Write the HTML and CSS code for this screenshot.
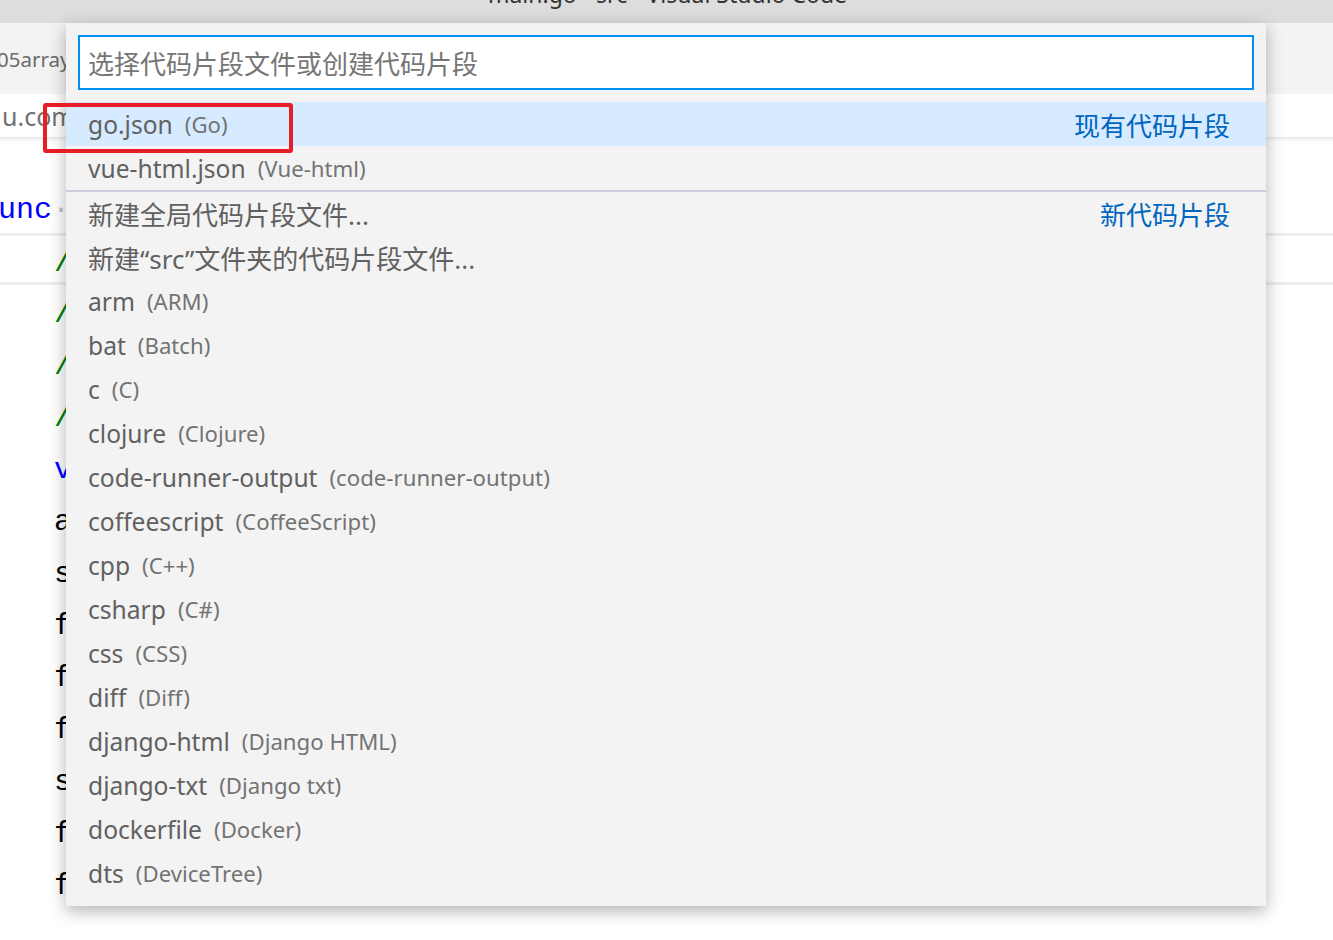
FILE: index.html
```html
<!DOCTYPE html>
<html lang="zh-CN">
<head>
<meta charset="utf-8">
<title>main.go - src - Visual Studio Code</title>
<link rel="stylesheet" href="styles.css">
</head>
<body>
<div class="window">
  <header class="titlebar"><span class="title">main.go - src - Visual Studio Code</span></header>
  <div class="tabs"><span class="tab-label">05array.go</span></div>
  <div class="breadcrumbs"><span class="crumb">u.com</span></div>
  <div class="editor">
    <div class="code">
      <div class="line"><span class="kw">func</span><span class="ws">·</span>main() {</div>
      <div class="line current indent"><span class="cm">// 数组的定义</span></div>
      <div class="line indent"><span class="cm">// 数组是同一种数据类型元素的集合</span></div>
      <div class="line indent"><span class="cm">// 数组的长度是固定的</span></div>
      <div class="line indent"><span class="cm">// 数组的长度是类型的一部分</span></div>
      <div class="line indent"><span class="kw">var</span> a1 [3]bool</div>
      <div class="line indent">a1 = [3]bool{true, true, true}</div>
      <div class="line indent">s := a1[:]</div>
      <div class="line indent">fmt.Println(a1)</div>
      <div class="line indent">fmt.Println(s)</div>
      <div class="line indent">fmt.Printf("%T\n", a1)</div>
      <div class="line indent">s = append(s, false)</div>
      <div class="line indent">fmt.Println(len(s))</div>
      <div class="line indent">fmt.Println(cap(s))</div>
    </div>
  </div>

  <div class="quick-input">
    <div class="qi-header">
      <input class="qi-box" type="text" placeholder="选择代码片段文件或创建代码片段">
    </div>
    <div class="qi-list">
      <div class="qi-row focused"><span class="qi-label">go.json</span><span class="qi-desc">(Go)</span><span class="qi-group">现有代码片段</span></div>
      <div class="qi-row"><span class="qi-label">vue-html.json</span><span class="qi-desc">(Vue-html)</span></div>
      <div class="qi-row separated cjk"><span class="qi-label">新建全局代码片段文件...</span><span class="qi-group">新代码片段</span></div>
      <div class="qi-row cjk"><span class="qi-label">新建“src”文件夹的代码片段文件...</span></div>
      <div class="qi-row"><span class="qi-label">arm</span><span class="qi-desc">(ARM)</span></div>
      <div class="qi-row"><span class="qi-label">bat</span><span class="qi-desc">(Batch)</span></div>
      <div class="qi-row"><span class="qi-label">c</span><span class="qi-desc">(C)</span></div>
      <div class="qi-row"><span class="qi-label">clojure</span><span class="qi-desc">(Clojure)</span></div>
      <div class="qi-row"><span class="qi-label">code-runner-output</span><span class="qi-desc">(code-runner-output)</span></div>
      <div class="qi-row"><span class="qi-label">coffeescript</span><span class="qi-desc">(CoffeeScript)</span></div>
      <div class="qi-row"><span class="qi-label">cpp</span><span class="qi-desc">(C++)</span></div>
      <div class="qi-row"><span class="qi-label">csharp</span><span class="qi-desc">(C#)</span></div>
      <div class="qi-row"><span class="qi-label">css</span><span class="qi-desc">(CSS)</span></div>
      <div class="qi-row"><span class="qi-label">diff</span><span class="qi-desc">(Diff)</span></div>
      <div class="qi-row"><span class="qi-label">django-html</span><span class="qi-desc">(Django HTML)</span></div>
      <div class="qi-row"><span class="qi-label">django-txt</span><span class="qi-desc">(Django txt)</span></div>
      <div class="qi-row"><span class="qi-label">dockerfile</span><span class="qi-desc">(Docker)</span></div>
      <div class="qi-row"><span class="qi-label">dts</span><span class="qi-desc">(DeviceTree)</span></div>
    </div>
  </div>

  <div class="annotation"></div>
</div>
</body>
</html>
```

FILE: styles.css
```css
* { box-sizing: border-box; }

html, body {
  margin: 0;
  padding: 0;
  width: 1333px;
  height: 940px;
  overflow: hidden;
  background: #ffffff;
  font-family: "Noto Sans", "Noto Sans CJK SC", sans-serif;
}

.window {
  position: relative;
  width: 1333px;
  height: 940px;
  overflow: hidden;
  background: #ffffff;
}

/* title bar */
.titlebar {
  height: 23px;
  background: #dddddd;
  overflow: hidden;
  display: flex;
  justify-content: center;
}
.title {
  display: block;
  margin-top: -17px;
  margin-left: 2px;
  font-size: 23px;
  line-height: 23px;
  color: #333333;
  white-space: nowrap;
}

/* tabs */
.tabs {
  height: 71px;
  background: #f3f3f3;
  display: flex;
  align-items: center;
  overflow: hidden;
}
.tab-label {
  margin-left: -3px;
  font-size: 20.5px;
  color: #6b6b6b;
  white-space: nowrap;
}

/* breadcrumbs */
.breadcrumbs {
  height: 43px;
  background: #ffffff;
  display: flex;
  align-items: center;
  overflow: hidden;
}
.crumb {
  margin-left: 2px;
  font-size: 25px;
  color: #717171;
  white-space: nowrap;
}

/* editor */
.editor {
  height: 803px;
  padding-top: 45px;
  box-shadow: inset 0 6px 6px -6px #cfcfcf;
  overflow: hidden;
}
.code {
  margin-left: -20px;
  font-family: "Liberation Mono", "DejaVu Sans Mono", monospace;
  font-size: 30px;
  color: #000000;
}
.line {
  height: 52px;
  line-height: 56px;
  white-space: pre;
  overflow: hidden;
}
.line.indent { padding-left: 74px; }
.line.current {
  border-top: 3px solid #eeeeee;
  border-bottom: 3px solid #eeeeee;
  line-height: 54px;
  margin-top: -1px;
  margin-bottom: 1px;
}
.kw { color: #0000ff; }
.cm { color: #008000; }
.ws { color: rgba(51, 51, 51, 0.3); }

/* quick input (overlay) */
.quick-input {
  position: absolute;
  left: 66px;
  top: 23px;
  width: 1200px;
  background: #f3f3f3;
  box-shadow: 0 5px 16px rgba(0, 0, 0, 0.3);
  z-index: 2;
}
.qi-header {
  padding: 12px;
}
.qi-box {
  display: block;
  width: 100%;
  height: 55px;
  margin: 0;
  border: 2px solid #0090f1;
  background: #ffffff;
  padding: 2px 8px 0;
  font-family: "Noto Sans", "Noto Sans CJK SC", sans-serif;
  font-size: 26px;
  color: #616161;
  outline: none;
}
.qi-box::placeholder {
  color: #767676;
  opacity: 1;
}

.qi-list {
  padding-bottom: 11px;
}
.qi-row {
  height: 44px;
  display: flex;
  align-items: center;
  padding: 1px 36px 0 22px;
  white-space: nowrap;
}
.qi-row.focused { background: #d6ebff; }
.qi-row.separated {
  border-top: 2px solid #cccedb;
  height: 45px;
}
.qi-label {
  font-size: 24.6px;
  color: #616161;
}
.qi-row.cjk .qi-label { font-size: 26px; }
.qi-desc {
  margin-left: 12px;
  font-size: 22.2px;
  color: #737373;
}
.qi-group {
  margin-left: auto;
  font-size: 26px;
  color: #0066bf;
}

/* red annotation box drawn over the screenshot */
.annotation {
  position: absolute;
  left: 43px;
  top: 103px;
  width: 250px;
  height: 50px;
  border: 4px solid #e81d25;
  border-radius: 3px;
  z-index: 3;
}
```
